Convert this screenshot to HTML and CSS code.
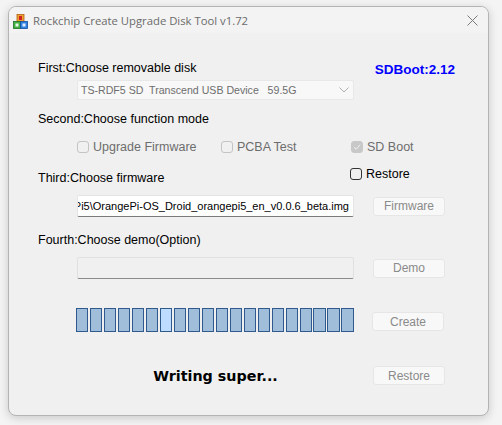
FILE: index.html
```html
<!DOCTYPE html>
<html>
<head>
<meta charset="utf-8">
<link rel="stylesheet" href="styles.css">
</head>
<body>
<div class="window">
  <div class="titlebar">
    <svg class="appicon" width="15" height="15" viewBox="0 0 15 15">
      <rect x="4" y="0.5" width="7" height="7" fill="#f0a030" stroke="#b06010" stroke-width="0.8"/>
      <rect x="6" y="2" width="3" height="4" fill="#d02020"/>
      <rect x="0.5" y="7.5" width="7" height="7" fill="#40b040" stroke="#207020" stroke-width="0.8"/>
      <rect x="7.5" y="7.5" width="7" height="7" fill="#3080e0" stroke="#1050a0" stroke-width="0.8"/>
      <rect x="2.5" y="9.5" width="3" height="3" fill="#e8f8e8"/>
      <rect x="9.5" y="9.5" width="3" height="3" fill="#e0ecff"/>
    </svg>
    <span class="title">Rockchip Create Upgrade Disk Tool v1.72</span>
    <svg class="close" width="11" height="11" viewBox="0 0 11 11">
      <path d="M0.5 0.5 L10.5 10.5 M10.5 0.5 L0.5 10.5" stroke="#7a7a7a" stroke-width="1"/>
    </svg>
  </div>
  <div class="content">
    <div class="row r1">
      <span class="label">First:Choose removable disk</span>
      <span class="sdboot">SDBoot:2.12</span>
    </div>
    <div class="combo">
      <span>TS-RDF5 SD  Transcend USB Device   59.5G</span>
      <svg width="10" height="6" viewBox="0 0 10 6"><path d="M0.5 0.5 L5 5 L9.5 0.5" fill="none" stroke="#b0b0b0" stroke-width="1"/></svg>
    </div>
    <div class="row r2"><span class="label">Second:Choose function mode</span></div>
    <div class="checks">
      <span class="chk c1"><span class="box"></span>Upgrade Firmware</span>
      <span class="chk c2"><span class="box"></span>PCBA Test</span>
      <span class="chk c3"><span class="box checked"><svg width="8" height="8" viewBox="0 0 8 8"><path d="M1 4.2 L3.2 6.3 L7 1.8" fill="none" stroke="#f0f0f0" stroke-width="1"/></svg></span>SD Boot</span>
    </div>
    <div class="row r3">
      <span class="label third">Third:Choose firmware</span>
      <span class="chk restore"><span class="box dark"></span>Restore</span>
    </div>
    <div class="line fw-line">
      <div class="field fw"><span>Pi5\OrangePi-OS_Droid_orangepi5_en_v0.0.6_beta.img</span></div>
      <div class="btn">Firmware</div>
    </div>
    <div class="row r4"><span class="label">Fourth:Choose demo(Option)</span></div>
    <div class="line demo-line">
      <div class="field demo"></div>
      <div class="btn">Demo</div>
    </div>
    <div class="line prog-line">
      <div class="progress">
        <i></i><i></i><i></i><i></i><i></i><i></i><i class="lit"></i><i></i><i></i><i></i>
        <i></i><i></i><i></i><i></i><i></i><i></i><i></i><i></i><i></i><i></i>
      </div>
      <div class="btn">Create</div>
    </div>
    <div class="line status-line">
      <div class="status">Writing super...</div>
      <div class="btn">Restore</div>
    </div>
  </div>
</div>
</body>
</html>
```
FILE: styles.css
```css
html, body { margin: 0; padding: 0; }
body {
  width: 502px; height: 425px;
  background: #f4f4f4;
  font-family: "Liberation Sans", Arial, sans-serif;
  font-size: 12.5px;
  color: #000;
  overflow: hidden;
}
.window {
  margin: 6px 0 0 8px;
  width: 481px;
  height: 410px;
  box-sizing: border-box;
  background: #f0f0f0;
  border: 1px solid #b4b4b4;
  border-radius: 8px;
  box-shadow: 0 2px 10px rgba(0,0,0,0.18);
  overflow: hidden;
}
.titlebar {
  height: 26px;
  display: flex;
  align-items: center;
  background: #f3f3f3;
  padding-left: 4px;
}
.appicon { margin-top: 2px; }
.title {
  font-family: "Open Sans", "Noto Sans", sans-serif;
  font-size: 11.3px;
  color: #6b6b6b;
  margin-left: 5px;
  margin-top: 1px;
}
.close { margin-left: auto; margin-right: 10px; margin-top: 1px; }
.content {
  padding-left: 68px;
  padding-right: 43px;
}
.row { display: flex; align-items: center; }
.label { line-height: 14px; margin-left: -39px; white-space: nowrap; }
.r1 { margin-top: 28px; height: 14px; }
.sdboot {
  margin-left: auto;
  margin-right: -10px;
  color: #0000ff;
  font-weight: bold;
  font-size: 13.5px;
  position: relative; top: 1px;
}
.combo {
  margin-top: 5px;
  width: 277px; height: 20px;
  box-sizing: border-box;
  background: #f8f8f8;
  border: 1px solid #e8e8e8;
  border-radius: 2px;
  display: flex; align-items: center;
  padding: 0 4px 0 3px;
  color: #6d6d6d;
  font-size: 10.6px;
  white-space: pre;
}
.combo svg { margin-left: auto; }
.r2 { margin-top: 12px; height: 14px; }
.checks { display: flex; margin-top: 14px; height: 14px; align-items: center; color: #6d6d6d; }
.chk { display: flex; align-items: center; white-space: nowrap; }
.box {
  width: 12px; height: 12px; box-sizing: border-box;
  border: 1px solid #c4c4c4; border-radius: 3px;
  background: #f0f0f0;
  margin-right: 4px;
  display: flex; align-items: center; justify-content: center;
  flex: none;
}
.box.checked { background: #c8c8c8; border-color: #c8c8c8; }
.box.dark { border-color: #333; }
.c1 { width: 144px; }
.c2 { width: 130px; }
.r3 { margin-top: 13px; height: 18px; align-items: flex-start; }
.third { margin-top: 4px; width: 312px; flex: none; }
.restore { color: #000; }
.line { display: flex; align-items: center; }
.field {
  width: 277px; height: 22px; box-sizing: border-box;
  background: #fff;
  border: 1px solid #e4e4e4;
  border-bottom: 1px solid #7a7a7a;
  border-radius: 2px;
  overflow: hidden;
  display: flex; align-items: center; justify-content: flex-end;
  padding: 0 4px;
  white-space: nowrap;
  font-size: 11px;
  flex: none;
}
.fw-line { margin-top: 10px; }
.field.demo { background: #f0f0f0; border-color: #e0e0e0; border-bottom-color: #8a8a8a; }
.btn {
  margin-left: 19px;
  width: 72px; height: 19px; box-sizing: border-box;
  background: #f8f8f8;
  border: 1px solid #e6e6e6;
  border-radius: 3px;
  color: #8a8a8a;
  display: flex; align-items: center; justify-content: center;
  font-size: 12px;
  flex: none;
}
.r4 { margin-top: 16px; height: 14px; }
.demo-line { margin-top: 10px; }
.prog-line { margin-top: 29px; align-items: flex-end; }
.progress {
  width: 278px; height: 24px;
  display: flex; gap: 1.5px;
  margin-left: -1px;
  flex: none;
}
.progress i {
  display: block; flex: 1;
  box-sizing: border-box;
  border: 1.5px solid #2f5a8e;
  background: #a0bdda;
}
.progress i.lit { background: #bedcff; }
.prog-line .btn { margin-left: 18px; margin-bottom: 1px; }
.status-line { margin-top: 34px; }
.status {
  width: 277px;
  flex: none;
  text-align: center;
  font-weight: bold;
  font-size: 14.3px;
  font-family: "DejaVu Sans", Verdana, sans-serif;
}
```
